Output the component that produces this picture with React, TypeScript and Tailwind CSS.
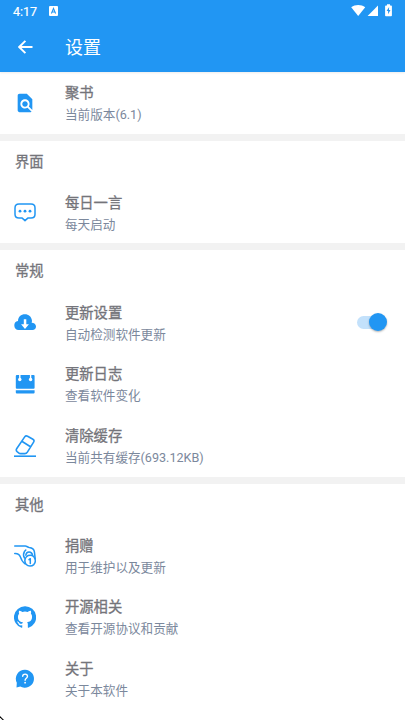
import React from 'react';

interface SettingItem {
  title: string;
  subtitle: string;
  icon: React.ReactNode;
  toggle?: boolean;
}

interface SettingSection {
  heading?: string;
  items: SettingItem[];
}

const SearchFileIcon = () => (
  <svg width="22" height="22" viewBox="0 0 24 24" fill="currentColor">
    <path d="M20 19.59V8l-6-6H6c-1.1 0-1.99.9-1.99 2L4 20c0 1.1.89 2 1.99 2H18c.45 0 .85-.15 1.19-.4l-4.43-4.43c-.8.52-1.74.83-2.76.83-2.76 0-5-2.24-5-5s2.24-5 5-5 5 2.24 5 5c0 1.02-.31 1.96-.83 2.75L20 19.59zM9 13c0 1.66 1.34 3 3 3s3-1.34 3-3-1.34-3-3-3-3 1.34-3 3z" />
  </svg>
);

const MessageIcon = () => (
  <svg width="22" height="22" viewBox="0 0 22 22" fill="none" stroke="currentColor" strokeWidth="1.5" strokeLinejoin="round">
    <path d="M5 2h12c2.700 0 4 1.400 4 3.900v6.400c0 2.500-1.300 3.800-4 3.800h-3.200L11 18.600l-2.800-2.500H5c-2.700 0-4-1.300-4-3.800V5.900C1 3.400 2.300 2 5 2z" />
    <g fill="currentColor" stroke="none">
      <circle cx="6" cy="9.200" r="1.400" />
      <circle cx="11" cy="9.200" r="1.400" />
      <circle cx="16" cy="9.200" r="1.400" />
    </g>
  </svg>
);

const CloudIcon = () => (
  <svg width="22" height="22" viewBox="0 0 22 22">
    <path fill="currentColor" d="M4.600 19a4.600 4.600 0 0 1-.6-9.100C4 5.900 7.100 3.200 10.900 3.200s6.500 2.500 7 6.100c.2 1.200-.1 2.200-.3 2.500 2.500.1 4.400 1.400 4.400 3.700 0 2.100-1.500 3.500-3.500 3.500z" />
    <path fill="#fff" d="M9.800 8.200h2.500v5h2.600L11 17.900l-3.900-4.700h2.700z" />
  </svg>
);

const CalendarIcon = () => (
  <svg width="22" height="22" viewBox="0 0 22 22" fill="currentColor">
    <rect x="1.800" y="2" width="18.800" height="13.700" rx="1" />
    <path d="M1.800 17.300h18.800v2.200c0 .6-.4.900-1 .9H2.800c-.6 0-1-.3-1-.9z" />
    <g fill="#fff">
      <rect x="5.100" y="1.500" width="1.400" height="5" />
      <circle cx="5.800" cy="6.500" r="1.700" />
      <rect x="15.900" y="1.500" width="1.400" height="5" />
      <circle cx="16.600" cy="6.500" r="1.700" />
    </g>
  </svg>
);

const EraserIcon = () => (
  <svg width="22" height="22" viewBox="0 0 22 22" fill="none" stroke="currentColor" strokeWidth="1.600" strokeLinejoin="round">
    <path d="M10.700 1.900c.8-1.200 1.800-1.300 2.900-.700l5.300 3c1.300.8 1.500 1.700.7 3l-6.200 9.900c-.7 1.100-1.500 1.500-2.600 1.500H6.700c-.8 0-1.500-.2-2.100-.7l-1.500-1.200c-1-.9-1.100-2-.3-3.200zM7.800 6.300l8.700 5.400" />
    <path d="M0 21.200h22" />
  </svg>
);

const DonateIcon = () => (
  <svg width="22" height="22" viewBox="0 0 22 22" fill="none" stroke="currentColor" strokeWidth="1.500" strokeLinecap="round" strokeLinejoin="round">
    <path d="M.7 1h10.600c1.500 0 2.400 1.300 3.900 1.500 3 .3 4.900 1.900 5.200 4.400l.8 6.800" />
    <path d="M.7 8.500c3.300-.2 4.700.6 5.700 3.400.9 3 2.100 5.300 4.700 7" />
    <path d="M10.500 13c-1.300-2-1.300-4.200-.1-6.400l1.400-1.600M11.800 10.200c.3-2.300 1.600-3.300 3.400-3.200 1.800.1 2.900 1.100 3.300 3" />
    <path d="M12.500 11.600c1.900-1.700 5.500-1.700 7.300 0 1.800 2.500 1.800 5.900 0 8-1.900 1.900-5.700 1.900-7.500 0-1.700-2.200-1.700-5.600.2-8z" />
    <path d="M15 14.600l1.300-.9v4.700" />
  </svg>
);

const GithubIcon = () => (
  <svg width="22" height="22" viewBox="0 0 24 24" fill="currentColor">
    <path d="M12 .3a12 12 0 0 0-3.800 23.400c.6.1.8-.3.800-.6v-2c-3.300.7-4-1.600-4-1.600-.600-1.400-1.400-1.800-1.400-1.800-1-.700.1-.700.1-.700 1.200 0 1.900 1.200 1.900 1.200 1 1.800 2.800 1.300 3.500 1 0-.8.400-1.300.7-1.600-2.700-.300-5.500-1.300-5.500-6 0-1.200.5-2.300 1.300-3.100-.2-.4-.6-1.600 0-3.200 0 0 1-.3 3.400 1.200a11.500 11.500 0 0 1 6 0c2.300-1.500 3.300-1.200 3.300-1.200.700 1.600.200 2.800.1 3.200.8.800 1.300 1.900 1.300 3.200 0 4.600-2.800 5.600-5.500 5.900.5.400.9 1 .9 2.200v3.300c0 .3.100.7.8.6A12 12 0 0 0 12 .3" />
  </svg>
);

const HelpIcon = () => (
  <svg width="22" height="22" viewBox="0 0 22 22" fill="none">
    <path fill="currentColor" d="M11.100 1.700a9 9 0 1 1-4.800 16.700L2.500 19.400l.3-4.600A9 9 0 0 1 11.100 1.700z" />
    <path stroke="#fff" strokeWidth="1.400" strokeLinecap="round" d="M8.700 8.300c0-3 4.800-2.900 4.800 0 0 1.900-2.400 1.900-2.400 3.900" />
    <circle cx="11.100" cy="14.700" r=".9" fill="#fff" />
  </svg>
);

const sections: SettingSection[] = [
  {
    items: [{ title: '聚书', subtitle: '当前版本(6.1)', icon: <SearchFileIcon /> }],
  },
  {
    heading: '界面',
    items: [{ title: '每日一言', subtitle: '每天启动', icon: <MessageIcon /> }],
  },
  {
    heading: '常规',
    items: [
      { title: '更新设置', subtitle: '自动检测软件更新', icon: <CloudIcon />, toggle: true },
      { title: '更新日志', subtitle: '查看软件变化', icon: <CalendarIcon /> },
      { title: '清除缓存', subtitle: '当前共有缓存(693.12KB)', icon: <EraserIcon /> },
    ],
  },
  {
    heading: '其他',
    items: [
      { title: '捐赠', subtitle: '用于维护以及更新', icon: <DonateIcon /> },
      { title: '开源相关', subtitle: '查看开源协议和贡献', icon: <GithubIcon /> },
      { title: '关于', subtitle: '关于本软件', icon: <HelpIcon /> },
    ],
  },
];

const StatusBar = () => (
  <div className="flex h-[22px] items-center pl-[13px] pr-[12px]">
    <span className="pt-[2px] text-[12.5px] leading-[20px] [-webkit-text-stroke:0.2px_#fff]">4:17</span>
    <svg className="ml-3" width="9" height="10" viewBox="0 0 9 10">
      <rect width="9" height="10" rx="1" fill="#fff" />
      <path d="M2.400 7.500L4.500 2.500l2.100 5M3.100 6h2.800" fill="none" stroke="#2196f3" strokeWidth="1.100" />
    </svg>
    <svg className="ml-auto" width="42" height="14" viewBox="0 0 42 14" fill="#fff">
      <path d="M.2 3.300C4.200.3 10.200.3 14.200 3.300L7.200 12z" />
      <path d="M27 1.600V12H16.600z" />
      <path d="M36 .2h3v1.200h1.100c.5 0 .8.300.8.800v9.200c0 .5-.3.800-.8.800h-5.200c-.5 0-.8-.3-.8-.8V2.200c0-.5.3-.8.800-.8H36z" />
      <path fill="#2196f3" d="M38.100 3l-2.500 4h1.500v3.200L39.500 6H38z" />
    </svg>
  </div>
);

const Switch = () => (
  <div className="relative ml-auto mr-[18px] h-[18px] w-[30px]">
    <div className="absolute left-0 top-[3px] h-[13px] w-[26px] rounded-full bg-[#c3e1fb]" />
    <div className="absolute right-0 top-0 size-[18px] rounded-full bg-[#2196f3] shadow-[0_1px_2px_rgba(0,0,0,0.3)]" />
  </div>
);

const Row: React.FC<{ item: SettingItem }> = ({ item }) => (
  <div className="flex h-[61.7px] items-center">
    <div className="ml-[14px] w-[51px] text-[#2196f3]">{item.icon}</div>
    <div className="pt-[2.4px]">
      <p className="text-[14.3px] leading-[22px] text-[#74747a] [-webkit-text-stroke:0.3px_#74747a]">{item.title}</p>
      <p className="text-[12.6px] leading-[22px] text-[#7b889c]">{item.subtitle}</p>
    </div>
    {item.toggle && <Switch />}
  </div>
);

const App: React.FC = () => {
  return (
    <div className="relative h-[720px] w-[405px] overflow-hidden bg-white font-[Roboto,'Noto_Sans_CJK_SC',sans-serif]">
      <header className="h-[72px] bg-[#2196f3] text-white shadow-[0_1px_2px_rgba(0,0,0,0.08)]">
        <StatusBar />
        <div className="flex h-[50px] items-center pl-[18px]">
          <svg width="15" height="14" viewBox="0 0 15 14" fill="none" stroke="#fff" strokeWidth="1.900">
            <path d="M14.500 7H1.500M7.400.8L1.200 7l6.200 6.200" />
          </svg>
          <h1 className="ml-8 pt-[2px] text-[18px] leading-[26px]">设置</h1>
        </div>
      </header>
      <main>
        {sections.map((section, index) => (
          <section key={index}>
            {section.heading && (
              <div className="h-[48.1px] border-t-[7px] border-[#f2f2f2] pl-[15px] pt-px">
                <h2 className="text-[14.3px] leading-[41px] text-[#74747a] [-webkit-text-stroke:0.3px_#74747a]">{section.heading}</h2>
              </div>
            )}
            {section.items.map((item) => (
              <Row key={item.title} item={item} />
            ))}
          </section>
        ))}
      </main>
      {/* screen corner edge */}
      <svg className="absolute bottom-0 left-0" width="4" height="4" viewBox="0 0 4 4">
        <path d="M0 0l4 4H2.500L0 1.500z" fill="#000" />
      </svg>
    </div>
  );
};

export default App;
